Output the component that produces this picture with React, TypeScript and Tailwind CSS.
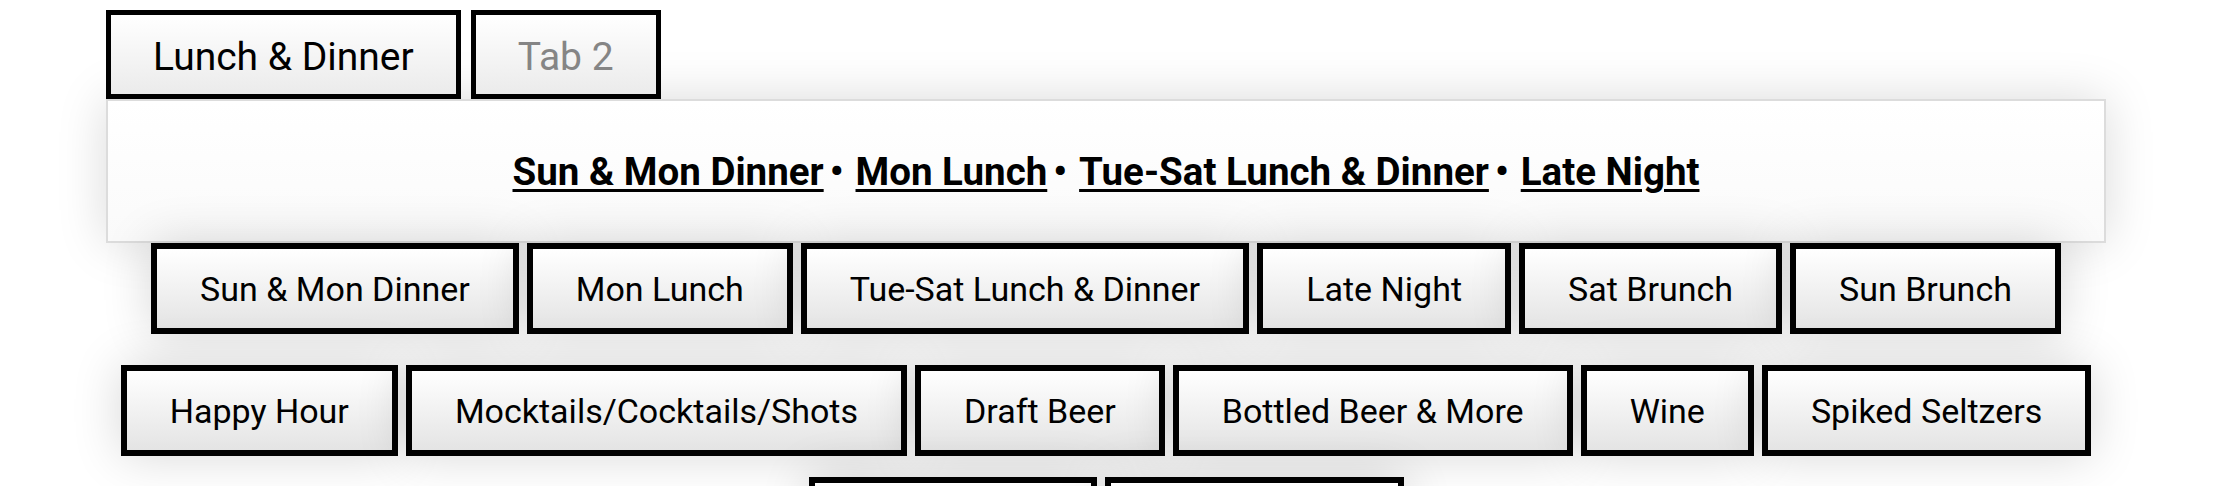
import { useState } from 'react';

const tabs = ['Lunch & Dinner', 'Tab 2'];

const menuLinks = ['Sun & Mon Dinner', 'Mon Lunch', 'Tue-Sat Lunch & Dinner', 'Late Night'];

const menuRows = [
  ['Sun & Mon Dinner', 'Mon Lunch', 'Tue-Sat Lunch & Dinner', 'Late Night', 'Sat Brunch', 'Sun Brunch'],
  ['Happy Hour', 'Mocktails/Cocktails/Shots', 'Draft Beer', 'Bottled Beer & More', 'Wine', 'Spiked Seltzers'],
];

const extraRow = ['Kids Menu', 'Gluten Free'];

export default function App() {
  const [activeTab, setActiveTab] = useState(0);

  return (
    <div className="w-full h-[486px] overflow-hidden bg-white font-['Roboto',sans-serif] text-black">
      <div className="w-[2000px] ml-[106px] pt-[10px]">
        {/* Tabs */}
        <div className="flex gap-[10px]">
          {tabs.map((tab, i) => (
            <button
              key={tab}
              onClick={() => setActiveTab(i)}
              className={`h-[89px] px-[42px] pt-[5px] border-[5px] border-black bg-gradient-to-b from-white to-[#ebebeb] text-[39px] leading-none ${
                activeTab === i ? 'text-black' : 'text-[#858585]'
              }`}
            >
              {tab}
            </button>
          ))}
        </div>

        {/* Panel */}
        <div className="h-[144px] border-2 border-[#dcdcdc] bg-gradient-to-b from-white to-[#fafafa] shadow-[0_0_50px_rgba(0,0,0,0.15)] flex items-center justify-center">
          <p className="text-[38.5px] font-bold leading-none pt-[2px]">
            {menuLinks.map((link, i) => (
              <span key={link}>
                <a href="#" className="underline decoration-[3px] underline-offset-[4px]">
                  {link}
                </a>
                {i < menuLinks.length - 1 && <span className="pl-[6px] pr-[12px]">•</span>}
              </span>
            ))}
          </p>
        </div>

        {/* Menu buttons */}
        <div className="flex flex-col items-center">
          {menuRows.map((row, r) => (
            <div key={r} className={`flex justify-center gap-[8px] ${r === 0 ? 'mt-0' : 'mt-[31px]'}`}>
              {row.map((item) => (
                <button
                  key={item}
                  className="h-[91px] px-[43px] border-[6px] border-black bg-gradient-to-b from-white to-[#e4e4e4] shadow-[0_0_50px_rgba(0,0,0,0.16)] text-[34px] leading-none whitespace-nowrap"
                >
                  {item}
                </button>
              ))}
            </div>
          ))}
          <div className="flex justify-center gap-[8px] mt-[21px]">
            {extraRow.map((item, i) => (
              <button
                key={item}
                className={`h-[91px] ${i === 0 ? 'w-[288px]' : 'w-[299px]'} border-[6px] border-black bg-gradient-to-b from-white to-[#e4e4e4] shadow-[0_0_50px_rgba(0,0,0,0.16)] text-[34px] leading-none whitespace-nowrap`}
              >
                {item}
              </button>
            ))}
          </div>
        </div>
      </div>
    </div>
  );
}
